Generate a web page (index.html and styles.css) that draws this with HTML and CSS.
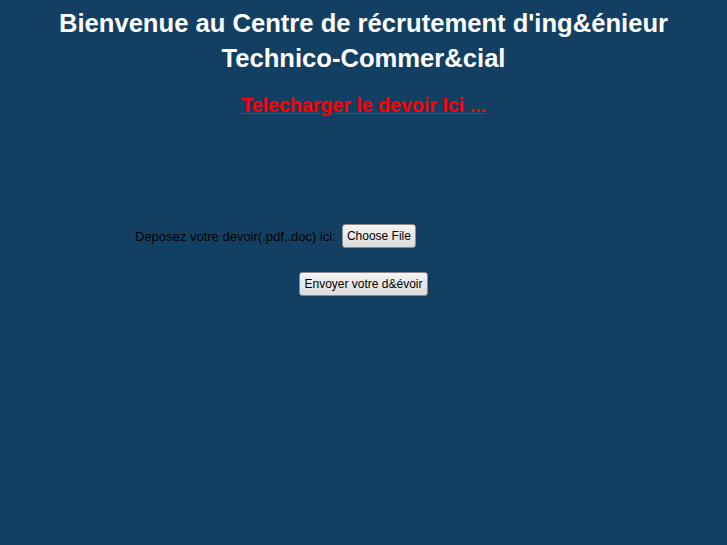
FILE: index.html
```html
<!DOCTYPE html>
<html lang="fr">
<head>
<meta charset="utf-8">
<title>Recrutement</title>
<link rel="stylesheet" href="styles.css">
</head>
<body>
<h1 class="title">Bienvenue au Centre de récrutement d'ing&amp;énieur<br>Technico-Commer&amp;cial</h1>
<p class="dl"><a href="#" class="dl-link">Telecharger le devoir Ici ...</a></p>
<form class="upload">
  <div class="row">
    <span class="label">Deposez votre devoir(.pdf,.doc) ici:</span>
    <button type="button" class="btn">Choose File</button>
  </div>
  <div class="submit-row">
    <button type="button" class="btn">Envoyer votre d&amp;évoir</button>
  </div>
</form>
</body>
</html>
```
FILE: styles.css
```css
html, body {
  margin: 0;
  padding: 0;
  background: #133f62;
  height: 100%;
}
body {
  font-family: "Liberation Sans", Arial, sans-serif;
  padding-top: 6px;
}
.title {
  margin: 0;
  text-align: center;
  color: #ffffff;
  font-size: 25.6px;
  line-height: 35px;
  font-weight: bold;
}
.dl {
  margin: 17px 0 0;
  text-align: center;
  font-size: 19.6px;
  font-weight: bold;
  line-height: 25px;
}
.dl-link {
  color: #ff0000;
  text-decoration: underline;
}
.upload {
  margin-top: 106px;
}
.row {
  display: flex;
  align-items: center;
  padding-left: 135px;
  gap: 6px;
  font-size: 13px;
  color: #000;
}
.submit-row {
  display: flex;
  justify-content: center;
  margin-top: 24px;
}
.btn {
  font-family: "Liberation Sans", Arial, sans-serif;
  font-size: 12px;
  color: #000;
  height: 24px;
  padding: 0 4px;
  border: 1px solid #8a8a8a;
  border-radius: 3px;
  background: linear-gradient(#f4f4f4, #dcdcdc);
}
```
